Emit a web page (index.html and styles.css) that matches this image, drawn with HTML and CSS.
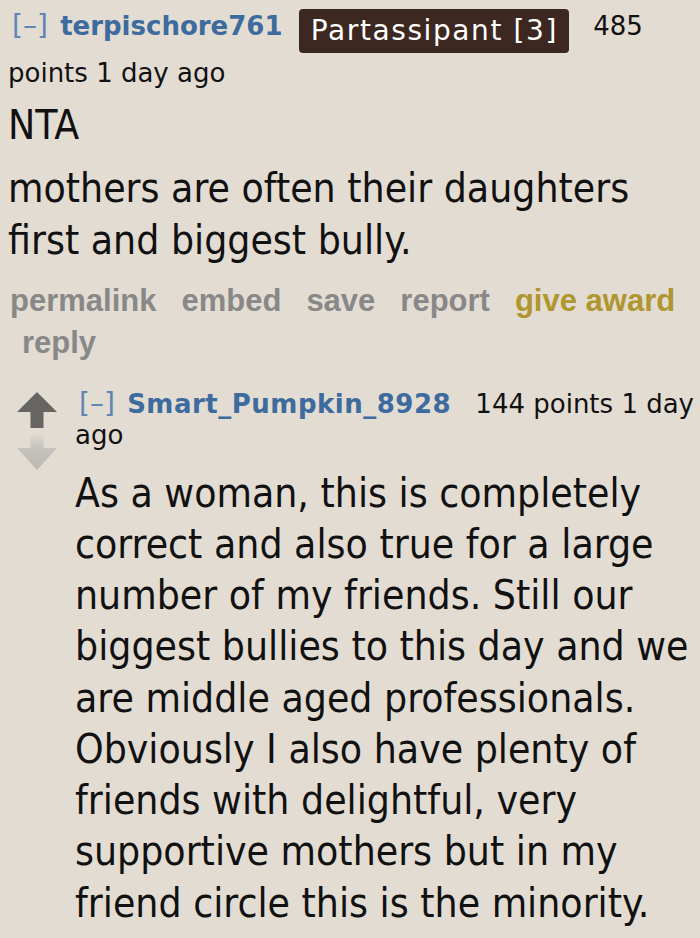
FILE: index.html
```html
<!DOCTYPE html>
<html lang="en">
<head>
<meta charset="utf-8">
<title>Comment thread</title>
<link rel="stylesheet" href="styles.css">
</head>
<body>
<div class="comment">
  <div class="entry">
    <p class="tagline"><a class="expand">[–]</a> <a class="author">terpischore761</a> <span class="flair">Partassipant [3]</span> <span class="score">485 points</span> <time>1 day ago</time></p>
    <div class="md">
      <p>NTA</p>
      <p>mothers are often their daughters first and biggest bully.</p>
    </div>
    <ul class="flat-list">
      <li>permalink</li>
      <li>embed</li>
      <li>save</li>
      <li>report</li>
      <li class="give-award">give award</li>
      <li>reply</li>
    </ul>
  </div>
  <div class="child">
    <div class="comment nested">
      <div class="midcol">
        <svg class="arrows" width="40" height="80" viewBox="0 0 40 80" aria-hidden="true">
          <defs>
            <linearGradient id="downfade" x1="0" y1="0" x2="0" y2="1">
              <stop offset="0" stop-color="#dcd8d2"/>
              <stop offset="0.4" stop-color="#c6c3be"/>
              <stop offset="1" stop-color="#bcb9b4"/>
            </linearGradient>
          </defs>
          <path d="M20 0 L40 20 L26.5 20 L26.5 36 L13.5 36 L13.5 20 L0 20 Z" fill="#676562"/>
          <path d="M13.5 42 L26.5 42 L26.5 56 L40 56 L20 78 L0 56 L13.5 56 Z" fill="url(#downfade)"/>
        </svg>
      </div>
      <div class="entry">
        <p class="tagline"><a class="expand">[–]</a> <a class="author author-wide">Smart_Pumpkin_8928</a> <span class="score">144 points</span> <time>1 day ago</time></p>
        <div class="md">
          <p>As a woman, this is completely correct and also true for a large number of my friends. Still our biggest bullies to this day and we are middle aged professionals. Obviously I also have plenty of friends with delightful, very supportive mothers but in my friend circle this is the minority.</p>
        </div>
      </div>
    </div>
  </div>
</div>
</body>
</html>
```

FILE: styles.css
```css
html, body {
  margin: 0;
  padding: 0;
}

body {
  background: #e3dcd2;
  color: #111;
  font-family: "DejaVu Sans", Verdana, sans-serif;
  width: 700px;
  overflow: hidden;
}

.comment {
  padding: 9px 0 0 8px;
}

.tagline {
  margin: 0;
  font-size: 26px;
  line-height: 31px;
  color: #111;
}

.expand {
  color: #5f86b6;
  font-size: 28px;
  line-height: 20px;
  margin: 0 4px 0 4px;
}

.author {
  color: #3d6b9e;
  font-weight: bold;
}

.author-wide {
  letter-spacing: 0.5px;
}

.flair {
  display: inline-block;
  background: #3c2820;
  color: #fff;
  font-size: 28px;
  line-height: 44px;
  letter-spacing: 1.6px;
  padding: 0 11px 0 12px;
  border-radius: 4px;
  vertical-align: -5px;
  margin: 0 0 4.5px 8px;
}

.score {
  margin-left: 16px;
}

.md {
  margin-top: 11.7px;
  font-family: "DejaVu Sans Condensed", "DejaVu Sans", sans-serif;
  font-stretch: semi-condensed;
  font-size: 40.5px;
  line-height: 51.25px;
  color: #111;
}

.md p {
  margin: 0;
}

.md p + p {
  margin-top: 12px;
}

.flat-list {
  list-style: none;
  margin: 13.6px 0 0 2px;
  padding: 0;
  display: flex;
  flex-wrap: wrap;
  column-gap: 13px;
  font-family: "Liberation Sans", Arial, sans-serif;
  font-weight: bold;
  font-size: 31px;
  line-height: 42px;
  color: #888;
}

.flat-list li {
  padding-left: 12px;
}

.flat-list li:first-child {
  padding-left: 0;
}

.flat-list .give-award {
  color: #b0962e;
}

.child {
  margin: 25.4px 0 0 9px;
}

.nested {
  display: flex;
  padding: 0;
}

.midcol {
  flex: none;
  width: 40px;
  margin: 3px 18px 0 0;
}

.arrows {
  display: block;
}

.nested .entry {
  flex: 1;
  min-width: 0;
}

.nested .md {
  margin-top: 16.7px;
}
```
